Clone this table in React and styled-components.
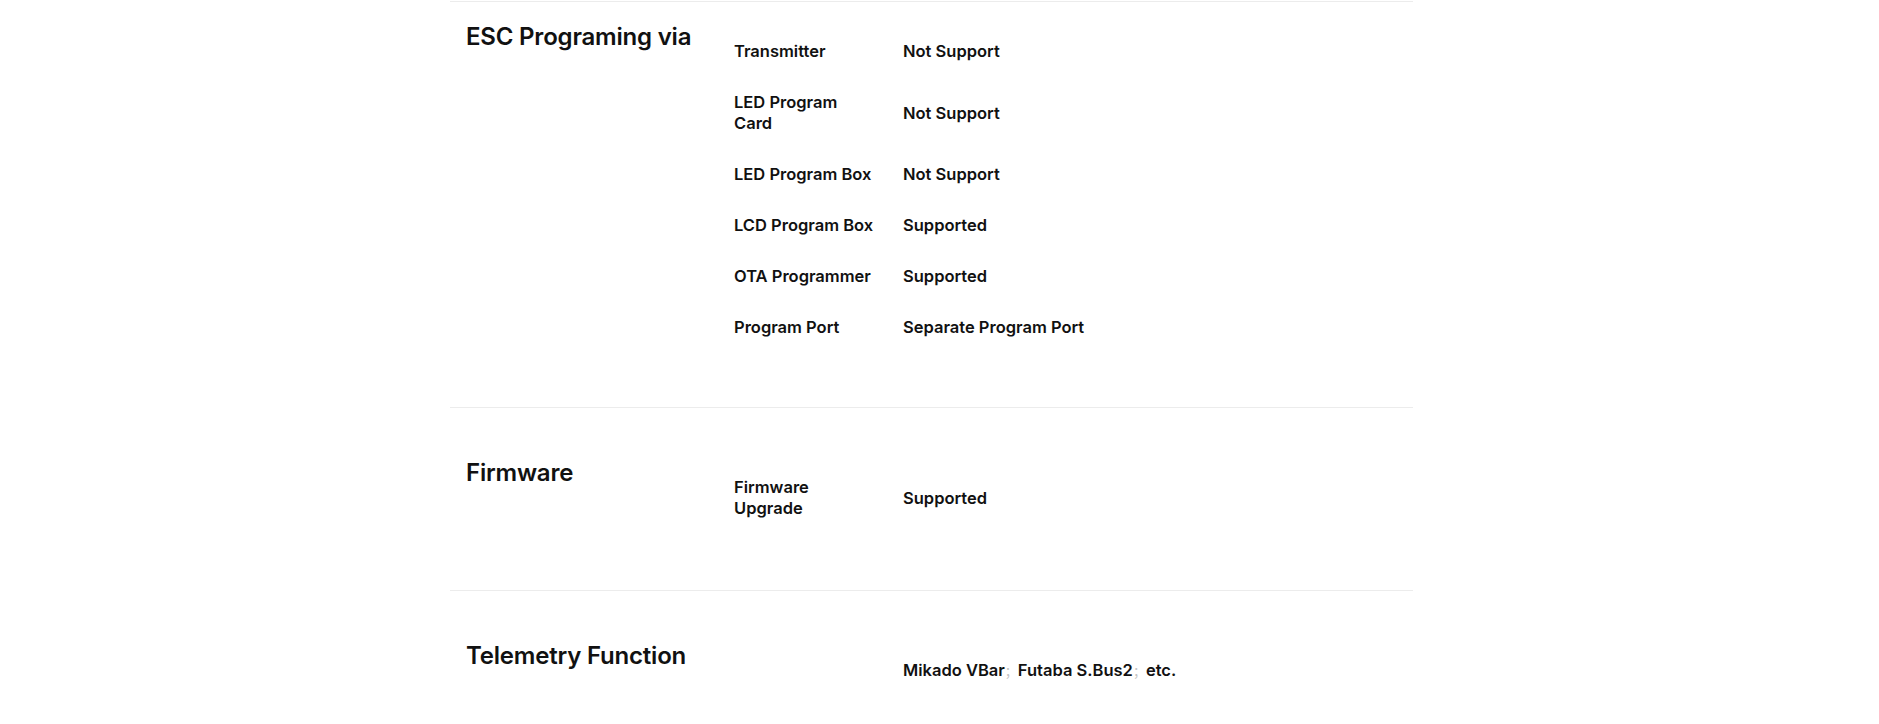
import React from "react";
import styled, {createGlobalStyle} from "styled-components";

const specs = [
  {
    title: "ESC Programing via",
    rows: [
      {label: "Transmitter", value: "Not Support"},
      {label: "LED Program Card", value: "Not Support"},
      {label: "LED Program Box", value: "Not Support"},
      {label: "LCD Program Box", value: "Supported"},
      {label: "OTA Programmer", value: "Supported"},
      {label: "Program Port", value: "Separate Program Port"},
    ],
  },
  {
    title: "Firmware",
    rows: [{label: "Firmware Upgrade", value: "Supported"}],
  },
  {
    title: "Telemetry Function",
    rows: [{label: "", value: ["Mikado VBar", "Futaba S.Bus2", "etc."]}],
  },
];

export default function App() {
  return (
    <>
      <GlobalStyle />
      <Page>
        <Container>
          {specs.map((s, i) => (
            <Section key={s.title} $first={i === 0}>
              <Title>{s.title}</Title>
              <SpecList>
                {s.rows.map((r, j) => (
                  <SpecRow key={j}>
                    <Label>{r.label}</Label>
                    <Value>
                      {Array.isArray(r.value)
                        ? r.value.map((v, k) => (
                            <React.Fragment key={v}>
                              {v}
                              {k < r.value.length - 1 && <Sep>；</Sep>}
                            </React.Fragment>
                          ))
                        : r.value}
                    </Value>
                  </SpecRow>
                ))}
              </SpecList>
            </Section>
          ))}
        </Container>
      </Page>
    </>
  );
}

const GlobalStyle = createGlobalStyle`
  html, body {
    margin: 0;
    padding: 0;
    background: #fff;
    overflow: hidden;
  }
  body {
    font-family: Inter, "Noto Sans", sans-serif;
    color: #111;
  }
`;

const Page = styled.div`
  display: flex;
  justify-content: center;
  padding: 1px 16px 0 0;
  height: 723px;
  overflow: hidden;
`;

const Container = styled.div`
  width: 963px;
`;

const Section = styled.section`
  display: grid;
  grid-template-columns: 268px 1fr;
  border-top: 1px solid #ececec;
  padding: ${p => (p.$first ? "19px 0 54px" : "49px 0 56px")} 16px;
`;

const Title = styled.h2`
  margin: 0;
  font-size: 24px;
  line-height: 32px;
  font-weight: 600;
  letter-spacing: -0.2px;
`;

const SpecList = styled.div`
  display: flex;
  flex-direction: column;
  padding-top: 5px;
`;

const SpecRow = styled.div`
  display: grid;
  grid-template-columns: 141px 1fr;
  column-gap: 28px;
  align-items: center;
  padding: 15px 0;
  font-size: 16.5px;
  line-height: 21px;
  font-weight: 600;
`;

const Label = styled.div``;

const Value = styled.div`
  white-space: nowrap;
`;

const Sep = styled.span`
  font-family: "Noto Sans CJK SC", sans-serif;
  font-size: 13px;
  font-weight: 400;
  color: #c4c4c4;
`;
